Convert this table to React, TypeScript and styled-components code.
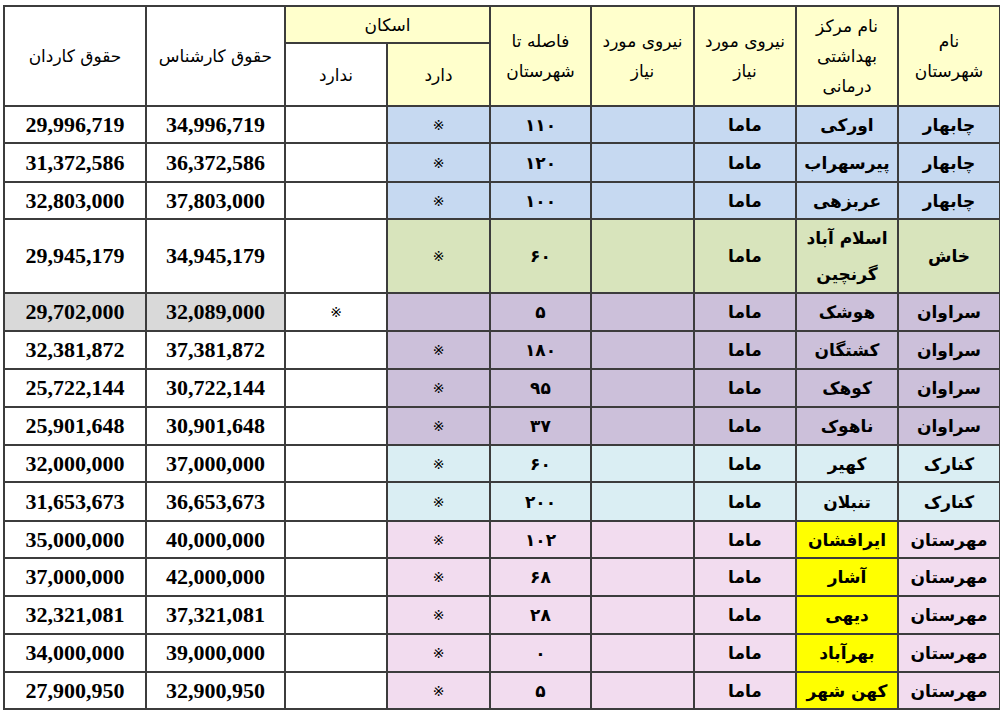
import styled, { createGlobalStyle } from "styled-components"

const GlobalStyle = createGlobalStyle`
  html, body {
    margin: 0;
    padding: 0;
    background: #ffffff;
  }
`

const tones: Record<string, string> = {
  blue: '#c6d9f1',
  green: '#d8e4bc',
  purple: '#ccc0da',
  cyan: '#daeef3',
  pink: '#f2dcef',
  header: '#ffffcc',
  white: '#ffffff',
  gray: '#d9d9d9',
  mark: '#ffff00',
}

const Page = styled.div`
  padding: 5px 0 0 3px;
  width: 1000px;
  box-sizing: border-box;
`

const Table = styled.table`
  border-collapse: collapse;
  table-layout: fixed;
  width: 996px;
  direction: rtl;
  font-family: "DejaVu Sans", "Noto Sans", sans-serif;
  color: #000;
`

const Col = styled.col<{ $w: number }>`
  width: ${p => p.$w}px;
`

const Head = styled.th<{ $bg?: string }>`
  border: 2px solid #3c3c3c;
  background: ${p => tones[p.$bg || 'white']};
  padding: 0 4px;
  font-weight: normal;
  font-size: 17px;
  line-height: 30px;
  text-align: center;
  vertical-align: middle;
`

const Cell = styled.td<{ $bg?: string }>`
  border: 2px solid #3c3c3c;
  background: ${p => tones[p.$bg || 'white']};
  padding: 0 4px;
  text-align: center;
  vertical-align: middle;
  font-size: 17px;
  font-weight: bold;
  line-height: 30px;
`

const TwoLines = styled.div`
  line-height: 36px;
`

const Money = styled(Cell)`
  font-family: "Liberation Serif", "Times New Roman", serif;
  font-size: 22px;
  direction: ltr;
`

const Star = styled(Cell)`
  font-size: 14px;
  font-weight: normal;
`

const Row = styled.tr<{ $h: number }>`
  height: ${p => p.$h}px;
`

type Item = {
  city: string
  center: string
  dist: string
  tone: string
  has: boolean
  expert: string
  tech: string
  h?: number
  mark?: boolean
  gray?: boolean
}

const rows: Item[] = [
  { city: 'چابهار', center: 'اورکی', dist: '۱۱۰', tone: 'blue', has: true, expert: '34,996,719', tech: '29,996,719', h: 37 },
  { city: 'چابهار', center: 'پیرسهراب', dist: '۱۲۰', tone: 'blue', has: true, expert: '36,372,586', tech: '31,372,586', h: 39 },
  { city: 'چابهار', center: 'عربزهی', dist: '۱۰۰', tone: 'blue', has: true, expert: '37,803,000', tech: '32,803,000', h: 37 },
  { city: 'خاش', center: 'اسلام آباد\nگرنچین', dist: '۶۰', tone: 'green', has: true, expert: '34,945,179', tech: '29,945,179', h: 74 },
  { city: 'سراوان', center: 'هوشک', dist: '۵', tone: 'purple', has: false, expert: '32,089,000', tech: '29,702,000', gray: true },
  { city: 'سراوان', center: 'کشتگان', dist: '۱۸۰', tone: 'purple', has: true, expert: '37,381,872', tech: '32,381,872' },
  { city: 'سراوان', center: 'کوهک', dist: '۹۵', tone: 'purple', has: true, expert: '30,722,144', tech: '25,722,144' },
  { city: 'سراوان', center: 'ناهوک', dist: '۳۷', tone: 'purple', has: true, expert: '30,901,648', tech: '25,901,648' },
  { city: 'کنارک', center: 'کهیر', dist: '۶۰', tone: 'cyan', has: true, expert: '37,000,000', tech: '32,000,000', h: 37 },
  { city: 'کنارک', center: 'تنبلان', dist: '۲۰۰', tone: 'cyan', has: true, expert: '36,653,673', tech: '31,653,673', h: 39 },
  { city: 'مهرستان', center: 'ایرافشان', dist: '۱۰۲', tone: 'pink', has: true, expert: '40,000,000', tech: '35,000,000', mark: true, h: 37 },
  { city: 'مهرستان', center: 'آشار', dist: '۶۸', tone: 'pink', has: true, expert: '42,000,000', tech: '37,000,000', mark: true },
  { city: 'مهرستان', center: 'دیهی', dist: '۲۸', tone: 'pink', has: true, expert: '37,321,081', tech: '32,321,081', mark: true },
  { city: 'مهرستان', center: 'بهرآباد', dist: '۰', tone: 'pink', has: true, expert: '39,000,000', tech: '34,000,000', mark: true },
  { city: 'مهرستان', center: 'کهن شهر', dist: '۵', tone: 'pink', has: true, expert: '32,900,950', tech: '27,900,950', mark: true, h: 37 },
]

const widths = [102, 102, 102, 103, 101, 103, 102, 139, 142]

const App = () => {
  return (
    <Page>
      <GlobalStyle />
      <Table>
        <colgroup>
          {widths.map((w, i) => <Col key={i} $w={w} />)}
        </colgroup>
        <thead>
          <Row $h={37}>
            <Head $bg="header" rowSpan={2}>نام<br />شهرستان</Head>
            <Head $bg="header" rowSpan={2}>نام مرکز<br />بهداشتی<br />درمانی</Head>
            <Head $bg="header" rowSpan={2}>نیروی مورد<br />نیاز</Head>
            <Head $bg="header" rowSpan={2}>نیروی مورد<br />نیاز</Head>
            <Head $bg="header" rowSpan={2}>فاصله تا<br />شهرستان</Head>
            <Head $bg="header" colSpan={2}>اسکان</Head>
            <Head rowSpan={2}>حقوق کارشناس</Head>
            <Head rowSpan={2}>حقوق کاردان</Head>
          </Row>
          <Row $h={63}>
            <Head $bg="header">دارد</Head>
            <Head>ندارد</Head>
          </Row>
        </thead>
        <tbody>
          {rows.map((r, i) => (
            <Row key={i} $h={r.h ?? 38}>
              <Cell $bg={r.tone}>{r.city}</Cell>
              <Cell $bg={r.mark ? 'mark' : r.tone}>
                {r.center.includes('\n') ? (
                  <TwoLines>
                    {r.center.split('\n').map((t, j) => (
                      <div key={j}>{t}</div>
                    ))}
                  </TwoLines>
                ) : r.center}
              </Cell>
              <Cell $bg={r.tone}>ماما</Cell>
              <Cell $bg={r.tone}></Cell>
              <Cell $bg={r.tone}>{r.dist}</Cell>
              <Star $bg={r.tone}>{r.has ? '※' : ''}</Star>
              <Star>{r.has ? '' : '※'}</Star>
              <Money $bg={r.gray ? 'gray' : 'white'}>{r.expert}</Money>
              <Money $bg={r.gray ? 'gray' : 'white'}>{r.tech}</Money>
            </Row>
          ))}
        </tbody>
      </Table>
    </Page>
  )
}

export default App
